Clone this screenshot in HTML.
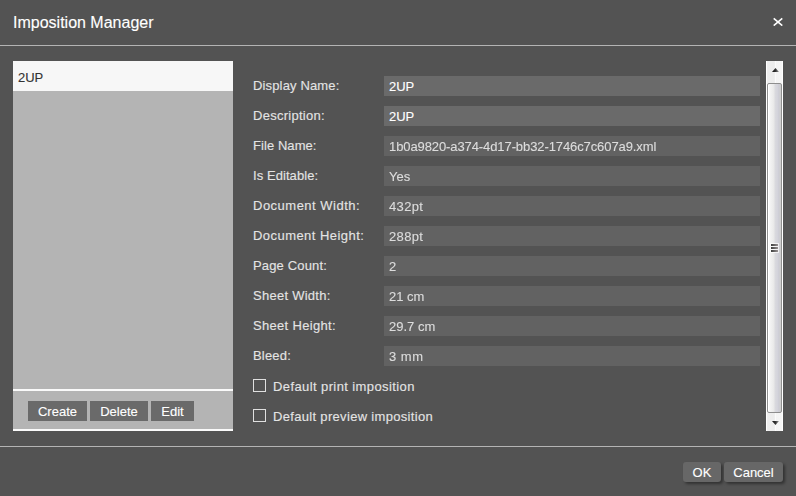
<!DOCTYPE html>
<html><head><meta charset="utf-8">
<style>
html,body{margin:0;padding:0;}
body{width:796px;height:496px;overflow:hidden;background:#535353;font-family:"Liberation Sans",sans-serif;font-size:13px;color:#e6e6e6;position:relative;-webkit-text-stroke:0.12px currentColor;}
.a{position:absolute;}
.title{left:13px;top:14px;font-size:16px;line-height:18px;color:#fff;white-space:nowrap;}
.close{left:773px;top:17px;width:10px;height:9px;}
.sep{left:0;width:796px;height:1px;background:#b4b4b4;}
.panel{left:13px;top:61px;width:220px;height:370px;background:#b4b4b4;}
.sel{left:0;top:0;width:220px;height:30px;background:#f7f7f7;color:#333;}
.sel span{position:absolute;left:5px;top:2px;line-height:30px;}
.wl{left:0;width:220px;height:2px;background:#fafafa;}
.btn{top:340px;height:20px;background:#6a6a6a;color:#fff;line-height:22px;text-align:center;}
.lbl{left:253px;line-height:20px;color:#e4e4e4;white-space:nowrap;}
.inp{left:384px;width:376px;height:20px;line-height:20px;background:#626262;color:#dcdcdc;white-space:nowrap;}
.inp span{position:absolute;left:5px;top:1px;}
.inp.ed{background:#6a6a6a;color:#fff;}
.inp.ro span{will-change:transform;}
.cb{left:253px;width:11px;height:11px;border:1px solid #e0e0e0;}
.cbl{left:273px;line-height:22px;color:#e4e4e4;white-space:nowrap;}
.sb{left:766px;top:61px;width:17px;height:370px;background:linear-gradient(to right,#fff 0,#fff 1px,#eeeeee 1px,#ececec 8px,#f4f4f4 10px,#f6f6f6 16px,#fff 16px);}
.thumb{left:1px;top:22px;width:13px;height:328px;border:1px solid #8e8e8e;border-radius:2px;background:linear-gradient(to right,#fff 0,#fff 1px,#f6f6f6 1px,#eeeeee 4px,#e8e8e8 6px,#dadade 7px,#d2d2da 10px,#cacad2 11px,#d2d2d2 12px,#c8c8c8 13px);}
.dbtn{top:462px;height:20px;background:#676767;color:#fff;line-height:22px;text-align:center;border-radius:3px;box-shadow:2px 2px 3px rgba(0,0,0,0.4);}
</style></head><body>
<div class="a title">Imposition Manager</div>
<svg class="a close" viewBox="0 0 10 9"><path d="M0.7 1.3 L9.3 8.6 M9.3 1.3 L0.7 8.6" stroke="#fff" stroke-width="1.6" fill="none"/></svg>
<div class="a sep" style="top:45px"></div>

<div class="a panel">
  <div class="a sel"><span>2UP</span></div>
  <div class="a wl" style="top:328px"></div>
  <div class="a btn" style="left:15px;width:59px">Create</div>
  <div class="a btn" style="left:77px;width:58px">Delete</div>
  <div class="a btn" style="left:138px;width:43px">Edit</div>
  <div class="a wl" style="top:368px"></div>
</div>

<div class="a lbl" style="top:76px;letter-spacing:0.15px">Display Name:</div>
<div class="a inp ed" style="top:76px"><span>2UP</span></div>
<div class="a lbl" style="top:106px;letter-spacing:0.27px">Description:</div>
<div class="a inp ed" style="top:106px"><span>2UP</span></div>
<div class="a lbl" style="top:136px;letter-spacing:0.07px">File Name:</div>
<div class="a inp ro" style="top:136px;letter-spacing:-0.095px"><span>1b0a9820-a374-4d17-bb32-1746c7c607a9.xml</span></div>
<div class="a lbl" style="top:166px;letter-spacing:0.07px">Is Editable:</div>
<div class="a inp ro" style="top:166px"><span>Yes</span></div>
<div class="a lbl" style="top:196px;letter-spacing:0.49px">Document Width:</div>
<div class="a inp ro" style="top:196px;letter-spacing:0.35px"><span>432pt</span></div>
<div class="a lbl" style="top:226px;letter-spacing:0.45px">Document Height:</div>
<div class="a inp ro" style="top:226px;letter-spacing:0.35px"><span>288pt</span></div>
<div class="a lbl" style="top:256px;letter-spacing:0.16px">Page Count:</div>
<div class="a inp ro" style="top:256px"><span>2</span></div>
<div class="a lbl" style="top:286px;letter-spacing:0.26px">Sheet Width:</div>
<div class="a inp ro" style="top:286px"><span>21 cm</span></div>
<div class="a lbl" style="top:316px;letter-spacing:0.31px">Sheet Height:</div>
<div class="a inp ro" style="top:316px"><span>29.7 cm</span></div>
<div class="a lbl" style="top:346px;letter-spacing:0.18px">Bleed:</div>
<div class="a inp ro" style="top:346px;letter-spacing:0.5px"><span>3 mm</span></div>

<div class="a cb" style="top:379px"></div>
<div class="a cbl" style="top:376px;letter-spacing:0.40px">Default print imposition</div>
<div class="a cb" style="top:409px"></div>
<div class="a cbl" style="top:406px;letter-spacing:0.32px">Default preview imposition</div>

<div class="a sb">
  <div class="a" style="left:0;top:0;width:1px;height:370px;background:#fff"></div>
  <div class="a" style="left:16px;top:0;width:1px;height:370px;background:#fff"></div>
  <div class="a" style="left:9px;top:0;width:1px;height:22px;background:#fbfbfb"></div>
  <div class="a" style="left:9px;top:352px;width:1px;height:18px;background:#fbfbfb"></div>
  <svg class="a" style="left:6px;top:7px" width="7" height="4" viewBox="0 0 7 4"><defs><linearGradient id="ag" x1="0" x2="1" y1="0" y2="0"><stop offset="0" stop-color="#111"/><stop offset="0.5" stop-color="#333"/><stop offset="1" stop-color="#999"/></linearGradient></defs><path d="M3.5 0 L7 4 L0 4 Z" fill="url(#ag)"/></svg>
  <svg class="a" style="left:6px;top:360px" width="7" height="4" viewBox="0 0 7 4"><path d="M0 0 L7 0 L3.5 4 Z" fill="url(#ag)"/></svg>
  <div class="a thumb"></div>
  <div class="a" style="left:4px;top:182px;width:9px;height:10px;background:rgba(255,255,255,0.7)"></div>
  <div class="a" style="left:5px;top:183px;width:7px;height:2px;opacity:0.85;background:linear-gradient(to right,#1e1e1e,#333 25%,#8a8282)"></div>
  <div class="a" style="left:5px;top:186px;width:7px;height:2px;opacity:0.85;background:linear-gradient(to right,#1e1e1e,#333 25%,#8a8282)"></div>
  <div class="a" style="left:5px;top:189px;width:7px;height:2px;opacity:0.85;background:linear-gradient(to right,#1e1e1e,#333 25%,#8a8282)"></div>
</div>

<div class="a sep" style="top:446px"></div>
<div class="a dbtn" style="left:683px;width:38px">OK</div>
<div class="a dbtn" style="left:724px;width:59px">Cancel</div>
</body></html>
